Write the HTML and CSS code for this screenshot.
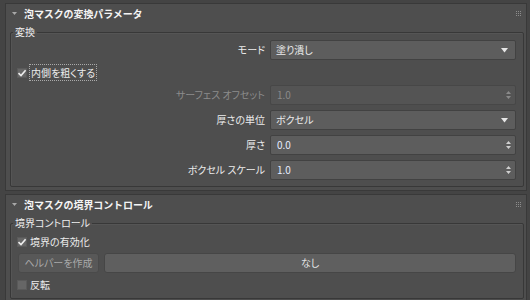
FILE: index.html
```html
<!DOCTYPE html>
<html lang="ja">
<head>
<meta charset="utf-8">
<link rel="stylesheet" href="styles.css">
</head>
<body>
<div class="panel p1">
  <div class="hdr">
    <svg class="tri" width="5" height="3" viewBox="0 0 5 3"><path d="M0 0H5L2.5 3Z" fill="#a8a8a8"/></svg>
    <span class="title">泡マスクの変換パラメータ</span>
    <svg class="grip" width="5" height="5" viewBox="0 0 5 5" fill="#8c8c8c"><rect x="0" y="0" width="1" height="1"/><rect x="2" y="0" width="1" height="1"/><rect x="4" y="0" width="1" height="1"/><rect x="0" y="2" width="1" height="1"/><rect x="2" y="2" width="1" height="1"/><rect x="4" y="2" width="1" height="1"/><rect x="0" y="4" width="1" height="1"/><rect x="2" y="4" width="1" height="1"/><rect x="4" y="4" width="1" height="1"/></svg>
  </div>
  <fieldset class="grp g1">
    <legend>変換</legend>
    <div class="rows">
      <div class="row">
        <span class="lbl">モード</span>
        <div class="field dd"><span>塗り潰し</span><svg width="7" height="5" viewBox="0 0 7 5"><path d="M0 0H7L3.5 4.5Z" fill="#e6e6e6"/></svg></div>
      </div>
      <div class="chkrow">
        <span class="chk"><svg width="10" height="10" viewBox="0 0 10 10"><path d="M1.5 5.2L4 7.6L8.6 2.2" fill="none" stroke="#eeeeee" stroke-width="1.6"/></svg></span>
        <span class="focus">内側を粗くする</span>
      </div>
      <div class="row">
        <span class="lbl dis">サーフェス オフセット</span>
        <div class="field spin off"><span>1.0</span><svg width="5" height="8" viewBox="0 0 5 8"><path d="M0 3H5L2.5 0Z M0 5H5L2.5 8Z" fill="#8a8a8a"/></svg></div>
      </div>
      <div class="row">
        <span class="lbl">厚さの単位</span>
        <div class="field dd"><span>ボクセル</span><svg width="7" height="5" viewBox="0 0 7 5"><path d="M0 0H7L3.5 4.5Z" fill="#e6e6e6"/></svg></div>
      </div>
      <div class="row">
        <span class="lbl">厚さ</span>
        <div class="field spin num"><span>0.0</span><svg width="5" height="8" viewBox="0 0 5 8"><path d="M0 3H5L2.5 0Z M0 5H5L2.5 8Z" fill="#d0d0d0"/></svg></div>
      </div>
      <div class="row">
        <span class="lbl">ボクセル スケール</span>
        <div class="field spin num"><span>1.0</span><svg width="5" height="8" viewBox="0 0 5 8"><path d="M0 3H5L2.5 0Z M0 5H5L2.5 8Z" fill="#d0d0d0"/></svg></div>
      </div>
    </div>
  </fieldset>
</div>
<div class="panel p2">
  <div class="hdr">
    <svg class="tri" width="5" height="3" viewBox="0 0 5 3"><path d="M0 0H5L2.5 3Z" fill="#a8a8a8"/></svg>
    <span class="title">泡マスクの境界コントロール</span>
    <svg class="grip" width="5" height="5" viewBox="0 0 5 5" fill="#8c8c8c"><rect x="0" y="0" width="1" height="1"/><rect x="2" y="0" width="1" height="1"/><rect x="4" y="0" width="1" height="1"/><rect x="0" y="2" width="1" height="1"/><rect x="2" y="2" width="1" height="1"/><rect x="4" y="2" width="1" height="1"/><rect x="0" y="4" width="1" height="1"/><rect x="2" y="4" width="1" height="1"/><rect x="4" y="4" width="1" height="1"/></svg>
  </div>
  <fieldset class="grp g2">
    <legend>境界コントロール</legend>
    <div class="rows2">
      <div class="chkrow">
        <span class="chk"><svg width="10" height="10" viewBox="0 0 10 10"><path d="M1.5 5.2L4 7.6L8.6 2.2" fill="none" stroke="#eeeeee" stroke-width="1.6"/></svg></span>
        <span class="clabel">境界の有効化</span>
      </div>
      <div class="btnrow">
        <div class="btn helper">ヘルパーを作成</div>
        <div class="btn none">なし</div>
      </div>
      <div class="chkrow">
        <span class="chk"></span>
        <span class="clabel">反転</span>
      </div>
    </div>
  </fieldset>
</div>
</body>
</html>
```
FILE: styles.css
```css
html, body {
  margin: 0;
  padding: 0;
}
body {
  background: #444444;
  width: 530px;
  height: 300px;
  overflow: hidden;
  display: flex;
  flex-direction: column;
  font-family: "Noto Sans CJK JP", "Noto Sans", sans-serif;
  font-size: 10px;
  line-height: 12px;
  color: #ececec;
  font-feature-settings: "palt";
}
.panel {
  background: #4e4e4e;
  border: 1px solid #393939;
  margin: 3px 3px 0 5px;
  display: flex;
  flex-direction: column;
  flex: none;
}
.p2 {
  margin-top: 3px;
  flex: 1;
  min-height: 0;
  overflow: hidden;
  border-bottom: 0;
}
.hdr {
  height: 19px;
  flex: none;
  display: flex;
  align-items: center;
  padding: 0 5px 0 6px;
}
.tri {
  display: block;
  margin-right: 7px;
}
.title {
  font-weight: bold;
  color: #f4f4f4;
  flex: 1;
  padding-top: 1px;
  font-feature-settings: normal;
  letter-spacing: -0.1px;
}
.grip {
  display: block;
}
.grp {
  margin: 3px 2px 3px 4px;
  padding: 0;
  border: 1px solid #383838;
  border-radius: 2px;
  box-shadow: inset 1px 1px 0 #555555;
  min-width: 0;
  flex: none;
}
.grp legend {
  padding: 0 2px;
  margin-left: 2px;
  color: #eeeeee;
}
.rows {
  display: flex;
  flex-direction: column;
  gap: 5px;
  padding: 2px 7px 6px 0;
}
.row {
  display: grid;
  grid-template-columns: 254px 246px;
  column-gap: 5px;
  align-items: center;
  height: 20px;
}
.lbl {
  text-align: right;
  white-space: nowrap;
}
.lbl.dis {
  color: #8c8c8c;
}
.field {
  height: 20px;
  box-sizing: border-box;
  border: 1px solid #424242;
  border-radius: 2px;
  background: #5d5d5d;
  display: flex;
  align-items: center;
  justify-content: space-between;
  padding: 0 7px 0 5px;
}
.field svg {
  display: block;
}
.field.spin {
  padding-right: 4px;
  padding-left: 6px;
}
.field.off {
  background: #545454;
  border-color: #474747;
  color: #8a8a8a;
}
.field.num {
  color: #e6ecff;
}
.chkrow {
  height: 15px;
  display: flex;
  align-items: center;
  padding-left: 6px;
}
.chk {
  width: 10px;
  height: 10px;
  background: #666666;
  box-sizing: border-box;
  border: 1px solid #5a5a5a;
  display: block;
}
.chk svg {
  display: block;
  margin: -1px;
}
.focus {
  margin-left: 2px;
  height: 17px;
  box-sizing: border-box;
  border: 1px dotted #aaaaaa;
  padding: 1px 1px 0 1px;
  line-height: 14px;
}
.clabel {
  margin-left: 3px;
}
.rows2 {
  display: flex;
  flex-direction: column;
  gap: 4px;
  padding: 5px 7px 6px 0;
}
.btnrow {
  display: flex;
  gap: 5px;
  padding-left: 7px;
  height: 20px;
}
.btn {
  height: 20px;
  box-sizing: border-box;
  border-radius: 3px;
  display: flex;
  align-items: center;
  justify-content: center;
}
.helper {
  width: 81px;
  background: #585858;
  border: 1px solid #4a4a4a;
  color: #a8a8a8;
}
.none {
  flex: 1;
  background: #5f5f5f;
  border: 1px solid #464646;
  color: #e4e4e4;
}
```
